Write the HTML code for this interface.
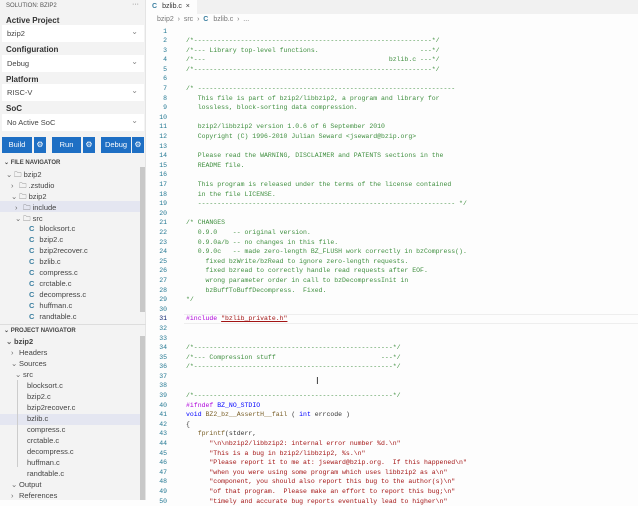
<!DOCTYPE html>
<html><head><meta charset="utf-8"><style>
*{margin:0;padding:0;box-sizing:border-box}
body{width:638px;height:500px;overflow:hidden;background:#fdfdfd;font-family:"Liberation Sans",sans-serif;position:relative}
#side{position:absolute;left:0;top:0;width:146px;height:500px;background:#f3f3f3;border-right:1px solid #e4e4e4}
.t{position:absolute;font-size:7px;color:#333;white-space:nowrap}
.lbl{position:absolute;left:6px;font-size:8px;font-weight:bold;color:#333}
.dd{position:absolute;left:2px;width:142px;height:17px;background:#fff;font-size:7.5px;color:#444;padding:4px 5px}
.dd:after{content:"⌄";position:absolute;right:6px;top:2px;color:#888;font-size:8px}
.btn{position:absolute;top:137px;height:16px;background:#1e6fc4;color:#fff;font-size:7.5px;text-align:center;line-height:16px}
.gear{position:absolute;top:137px;width:12px;height:16px;background:#1e6fc4;color:#fff;font-size:8px;text-align:center;line-height:16px}
.hd{position:absolute;left:4px;font-size:6px;font-weight:bold;color:#444}
.row{position:absolute;font-size:7.5px;color:#444;white-space:nowrap}
.ch{display:inline-block;width:8px;color:#666}
.c{color:#3b7fa0;font-weight:bold;margin-right:5px}
.hl{position:absolute;left:0;width:140px;height:11px;background:#e4e6f1}
.sb{position:absolute;left:140px;width:5px;background:#c8c8c8}
#tabs{position:absolute;left:147px;top:0;width:491px;height:14px;background:#f1f1f1}
#code{position:absolute;left:147px;top:26.5px;font-family:"Liberation Mono",monospace;font-size:6.5px;line-height:9.6px;white-space:pre;color:#333}
.n{display:inline-block;width:20px;text-align:right;color:#237893;margin-right:19px}
.g{color:#3f8f3f}.p{color:#af00db}.s{color:#a31515}.k{color:#0000ff}.f{color:#795e26}
</style></head><body>
<div id="side">
<div class="t" style="left:6px;top:3px;font-size:6px;color:#555">SOLUTION: BZIP2</div>
<div class="t" style="left:132px;top:1px;color:#666">···</div>
<div class="lbl" style="top:16px">Active Project</div><div class="dd" style="top:25px">bzip2</div>
<div class="lbl" style="top:45px">Configuration</div><div class="dd" style="top:55px">Debug</div>
<div class="lbl" style="top:75px">Platform</div><div class="dd" style="top:84px">RISC-V</div>
<div class="lbl" style="top:104px">SoC</div><div class="dd" style="top:114px">No Active SoC</div>
<div class="btn" style="left:2px;width:30px">Build</div><div class="gear" style="left:34px">⚙</div>
<div class="btn" style="left:52px;width:29px">Run</div><div class="gear" style="left:83px">⚙</div>
<div class="btn" style="left:101px;width:30px">Debug</div><div class="gear" style="left:132px">⚙</div>
<div class="hd" style="top:159px">⌄ FILE NAVIGATOR</div>
<div class="sb" style="top:167px;height:145px"></div>
<div class="hl" style="top:201px"></div>
<div class="row" style="left:6px;top:169px"><span class="ch">⌄</span>🗀 bzip2</div>
<div class="row" style="left:11px;top:180px"><span class="ch">›</span>🗀 .zstudio</div>
<div class="row" style="left:11px;top:191px"><span class="ch">⌄</span>🗀 bzip2</div>
<div class="row" style="left:15px;top:202px"><span class="ch">›</span>🗀 include</div>
<div class="row" style="left:15px;top:213px"><span class="ch">⌄</span>🗀 src</div>
<div class="row" style="left:29px;top:224px"><span class="c">C</span>blocksort.c</div>
<div class="row" style="left:29px;top:235px"><span class="c">C</span>bzip2.c</div>
<div class="row" style="left:29px;top:246px"><span class="c">C</span>bzip2recover.c</div>
<div class="row" style="left:29px;top:257px"><span class="c">C</span>bzlib.c</div>
<div class="row" style="left:29px;top:268px"><span class="c">C</span>compress.c</div>
<div class="row" style="left:29px;top:279px"><span class="c">C</span>crctable.c</div>
<div class="row" style="left:29px;top:290px"><span class="c">C</span>decompress.c</div>
<div class="row" style="left:29px;top:301px"><span class="c">C</span>huffman.c</div>
<div class="row" style="left:29px;top:312px"><span class="c">C</span>randtable.c</div>
<div style="position:absolute;left:0;top:324px;width:146px;border-top:1px solid #ddd"></div>
<div class="hd" style="top:327px">⌄ PROJECT NAVIGATOR</div>
<div class="sb" style="top:336px;height:164px"></div>
<div class="hl" style="top:414px"></div>
<div class="row" style="left:6px;top:337px;font-weight:bold"><span class="ch">⌄</span>bzip2</div>
<div class="row" style="left:11px;top:348px"><span class="ch">›</span>Headers</div>
<div class="row" style="left:11px;top:359px"><span class="ch">⌄</span>Sources</div>
<div class="row" style="left:15px;top:370px"><span class="ch">⌄</span>src</div>
<div style="position:absolute;left:17px;top:380px;height:87px;border-left:1px solid #ccc"></div>
<div class="row" style="left:27px;top:381px">blocksort.c</div>
<div class="row" style="left:27px;top:392px">bzip2.c</div>
<div class="row" style="left:27px;top:403px">bzip2recover.c</div>
<div class="row" style="left:27px;top:414px">bzlib.c</div>
<div class="row" style="left:27px;top:425px">compress.c</div>
<div class="row" style="left:27px;top:436px">crctable.c</div>
<div class="row" style="left:27px;top:447px">decompress.c</div>
<div class="row" style="left:27px;top:458px">huffman.c</div>
<div class="row" style="left:27px;top:469px">randtable.c</div>
<div class="row" style="left:11px;top:480px"><span class="ch">⌄</span>Output</div>
<div class="row" style="left:11px;top:491px"><span class="ch">›</span>References</div>
</div>
<div id="tabs"><div style="position:absolute;left:0;top:0;width:50px;height:14px;background:#fdfdfd"></div><div class="t" style="left:5px;top:3px"><span class="c">C</span>bzlib.c &nbsp;×</div></div>
<div class="t" style="left:157px;top:16px;color:#777">bzip2 &nbsp;› &nbsp;src &nbsp;› &nbsp;<span class="c">C</span>bzlib.c &nbsp;› &nbsp;...</div>
<div style="position:absolute;left:184px;top:314px;width:454px;height:10px;border-top:1px solid #eee;border-bottom:1px solid #eee"></div>
<div style="position:absolute;left:316px;top:376px;font-size:10px;color:#333">I</div>
<div id="code"><span class="n">1</span>
<span class="n">2</span><span class="g">/*-------------------------------------------------------------*/</span>
<span class="n">3</span><span class="g">/*--- Library top-level functions.                          ---*/</span>
<span class="n">4</span><span class="g">/*---                                               bzlib.c ---*/</span>
<span class="n">5</span><span class="g">/*-------------------------------------------------------------*/</span>
<span class="n">6</span>
<span class="n">7</span><span class="g">/* ------------------------------------------------------------------</span>
<span class="n">8</span><span class="g">   This file is part of bzip2/libbzip2, a program and library for</span>
<span class="n">9</span><span class="g">   lossless, block-sorting data compression.</span>
<span class="n">10</span>
<span class="n">11</span><span class="g">   bzip2/libbzip2 version 1.0.6 of 6 September 2010</span>
<span class="n">12</span><span class="g">   Copyright (C) 1996-2010 Julian Seward &lt;jseward@bzip.org&gt;</span>
<span class="n">13</span>
<span class="n">14</span><span class="g">   Please read the WARNING, DISCLAIMER and PATENTS sections in the</span>
<span class="n">15</span><span class="g">   README file.</span>
<span class="n">16</span>
<span class="n">17</span><span class="g">   This program is released under the terms of the license contained</span>
<span class="n">18</span><span class="g">   in the file LICENSE.</span>
<span class="n">19</span><span class="g">   ------------------------------------------------------------------ */</span>
<span class="n">20</span>
<span class="n">21</span><span class="g">/* CHANGES</span>
<span class="n">22</span><span class="g">   0.9.0    -- original version.</span>
<span class="n">23</span><span class="g">   0.9.0a/b -- no changes in this file.</span>
<span class="n">24</span><span class="g">   0.9.0c   -- made zero-length BZ_FLUSH work correctly in bzCompress().</span>
<span class="n">25</span><span class="g">     fixed bzWrite/bzRead to ignore zero-length requests.</span>
<span class="n">26</span><span class="g">     fixed bzread to correctly handle read requests after EOF.</span>
<span class="n">27</span><span class="g">     wrong parameter order in call to bzDecompressInit in</span>
<span class="n">28</span><span class="g">     bzBuffToBuffDecompress.  Fixed.</span>
<span class="n">29</span><span class="g">*/</span>
<span class="n">30</span>
<span class="n" style="color:#0b216f">31</span><span class="p">#include</span> <span class="s" style="text-decoration:underline">"bzlib_private.h"</span>
<span class="n">32</span>
<span class="n">33</span>
<span class="n">34</span><span class="g">/*---------------------------------------------------*/</span>
<span class="n">35</span><span class="g">/*--- Compression stuff                           ---*/</span>
<span class="n">36</span><span class="g">/*---------------------------------------------------*/</span>
<span class="n">37</span>
<span class="n">38</span>
<span class="n">39</span><span class="g">/*---------------------------------------------------*/</span>
<span class="n">40</span><span class="p">#ifndef</span> <span class="k">BZ_NO_STDIO</span>
<span class="n">41</span><span class="k">void</span> <span class="f">BZ2_bz__AssertH__fail</span> ( <span class="k">int</span> errcode )
<span class="n">42</span>{
<span class="n">43</span>   <span class="f">fprintf</span>(stderr,
<span class="n">44</span>      <span class="s">"\n\nbzip2/libbzip2: internal error number %d.\n"</span>
<span class="n">45</span>      <span class="s">"This is a bug in bzip2/libbzip2, %s.\n"</span>
<span class="n">46</span>      <span class="s">"Please report it to me at: jseward@bzip.org.  If this happened\n"</span>
<span class="n">47</span>      <span class="s">"when you were using some program which uses libbzip2 as a\n"</span>
<span class="n">48</span>      <span class="s">"component, you should also report this bug to the author(s)\n"</span>
<span class="n">49</span>      <span class="s">"of that program.  Please make an effort to report this bug;\n"</span>
<span class="n">50</span>      <span class="s">"timely and accurate bug reports eventually lead to higher\n"</span>
</div>
</body></html>
